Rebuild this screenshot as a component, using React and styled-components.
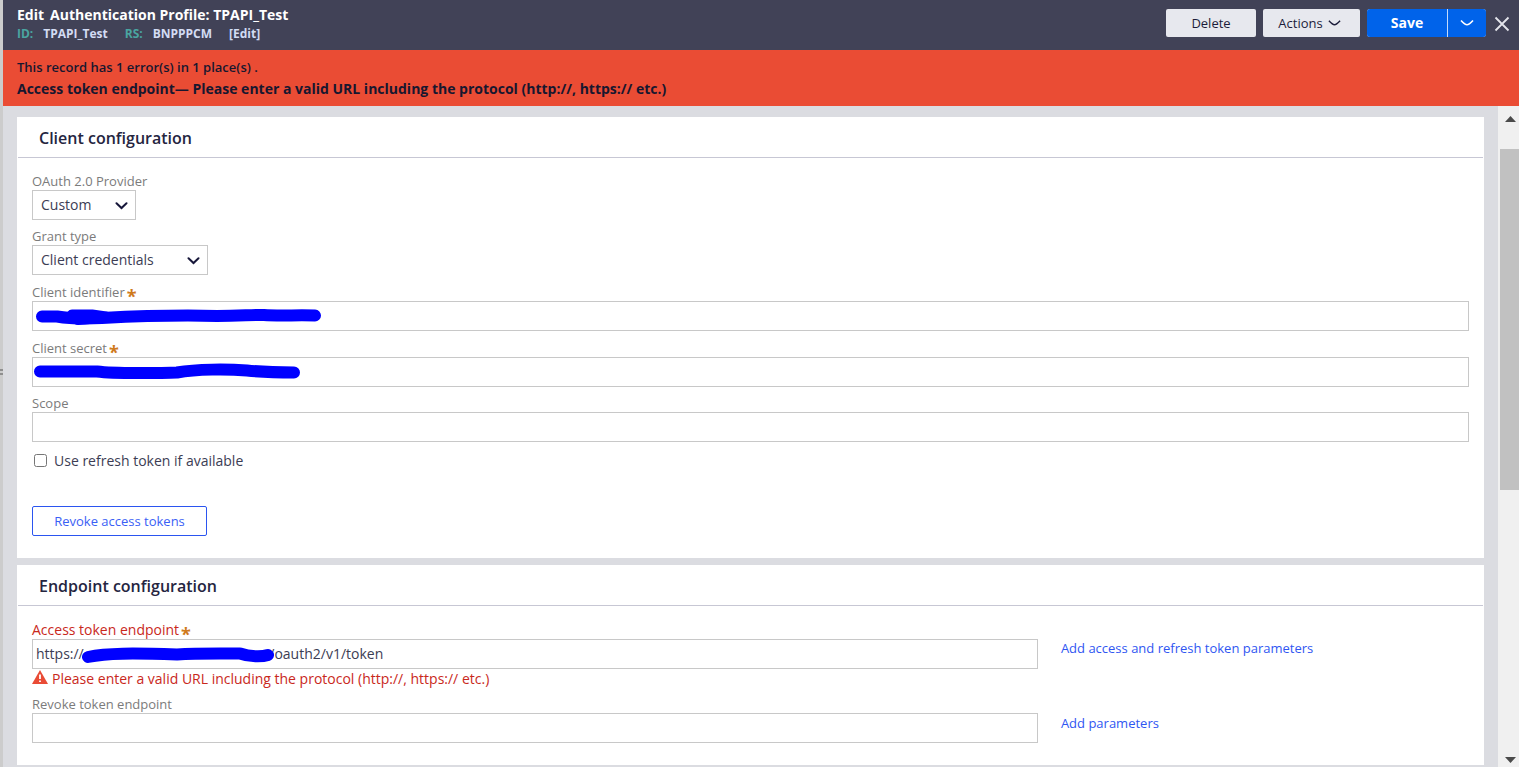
import React from "react";
import styled, { createGlobalStyle } from "styled-components";

const GlobalStyle = createGlobalStyle`
  * { box-sizing: border-box; }
  body {
    margin: 0;
    font-family: "Open Sans", "Noto Sans", sans-serif;
    font-size: 14px;
    color: #3c3d54;
    background: #dbdce1;
  }
  button, input, select { font-family: inherit; }
`;

const Page = styled.div`
  display: flex;
  height: 100vh;
  overflow: hidden;
`;

const Splitter = styled.div`
  flex: none;
  width: 3px;
  display: flex;
  flex-direction: column;
  justify-content: center;
  gap: 2px;
  padding-bottom: 24px;
  background: #cccccc;
`;

const Grip = styled.span`
  height: 2px;
  background: #8f8f8f;
`;

const Main = styled.div`
  flex: 1;
  min-width: 0;
  display: flex;
  flex-direction: column;
`;

const Header = styled.header`
  flex: none;
  display: flex;
  justify-content: space-between;
  height: 50px;
  padding: 0 9px 0 14px;
  background: #414257;
`;

const Heading = styled.div`
  padding-top: 5px;
`;

const Title = styled.h1`
  display: flex;
  gap: 6px;
  margin: 0;
  font-size: 14px;
  line-height: 20px;
  font-weight: 700;
  color: #ffffff;
`;

const Meta = styled.div`
  display: flex;
  font-size: 12px;
  line-height: 18px;
  font-weight: 700;
  color: #d3dcf3;
`;

const MetaKey = styled.span`
  margin-right: 10px;
  color: #4aa5a1;
`;

const MetaValue = styled.span`
  margin-right: 17px;
`;

const EditLink = styled.a`
  color: inherit;
  text-decoration: none;
`;

const Toolbar = styled.div`
  display: flex;
  align-items: flex-start;
  gap: 7px;
  padding-top: 9px;
`;

const ToolButton = styled.button`
  display: flex;
  align-items: center;
  justify-content: center;
  gap: 5px;
  width: ${(p) => p.$width}px;
  height: 28px;
  padding: 0;
  border: 0;
  border-radius: 2px;
  background: #e7e8ee;
  color: #1c1c3a;
  font-size: 13px;
`;

const MenuButton = styled(ToolButton)`
  padding-right: 4px;
`;

const SplitButton = styled.div`
  display: flex;
  gap: 1px;
  border-radius: 3px;
  overflow: hidden;
  background: #c4dafb;
`;

const PrimaryButton = styled.button`
  display: flex;
  align-items: center;
  justify-content: center;
  width: ${(p) => p.$width}px;
  height: 28px;
  padding: 0 0 1px;
  border: 0;
  background: #0063ea;
  color: #ffffff;
  font-size: 14px;
  font-weight: 700;
`;

const CloseButton = styled.button`
  display: flex;
  align-items: center;
  justify-content: center;
  width: 16px;
  height: 28px;
  margin-left: 1px;
  padding: 2px 0 0;
  border: 0;
  background: none;
`;

const ErrorBanner = styled.div`
  flex: none;
  height: 56px;
  padding: 7px 14px;
  background: #ea4c34;
  color: #17172f;
`;

const ErrorSummary = styled.p`
  margin: 0;
  font-size: 13px;
  line-height: 21px;
  font-weight: 600;
`;

const ErrorDetail = styled.p`
  margin: 0;
  font-size: 14px;
  line-height: 22px;
  font-weight: 700;
`;

const Viewport = styled.div`
  flex: 1;
  min-height: 0;
  display: flex;
`;

const Content = styled.main`
  flex: 1;
  min-width: 0;
  display: flex;
  flex-direction: column;
  gap: 7px;
  padding: 11px 14px 0;
  overflow: hidden;
`;

const Card = styled.section`
  flex: none;
  background: #ffffff;
`;

const CardTitle = styled.h2`
  margin: 0 1px;
  padding: 0 21px;
  border-bottom: 1px solid #c7c7d4;
  font-size: 16px;
  line-height: 42px;
  height: 41px;
  font-weight: 600;
  color: #25253f;
`;

const CardBody = styled.div`
  display: flex;
  flex-direction: column;
  gap: 8px;
  padding: 15px 15px 22px;
`;

const Field = styled.div`
  display: flex;
  flex-direction: column;
  align-items: flex-start;
`;

const Label = styled.label`
  height: ${(p) => (p.$required ? 18 : 17)}px;
  font-size: ${(p) => (p.$invalid ? 14 : 13)}px;
  line-height: ${(p) => (p.$required ? 18 : 16)}px;
  color: ${(p) => (p.$invalid ? "#c9281c" : "#7b7b7b")};
`;

const Star = styled.span`
  margin-left: 2px;
  font-size: 18px;
  line-height: 0;
  font-weight: 700;
  vertical-align: -6px;
  color: #cf7a1c;
`;

const ControlBox = styled.div`
  position: relative;
  width: ${(p) => p.$width || "100%"};
`;

const TextInput = styled.input`
  display: block;
  width: 100%;
  height: 30px;
  padding: 0 3px 2px;
  border: 1px solid #c8c8c8;
  border-radius: 0;
  background: #ffffff;
  color: #3c3d54;
  font-size: 14px;
`;

const Select = styled.select`
  display: block;
  width: 100%;
  height: 30px;
  padding: 0 8px 2px;
  appearance: none;
  border: 1px solid #c8c8c8;
  border-radius: 0;
  background: #ffffff;
  color: #3c3d54;
  font-size: 14px;
`;

const SelectArrow = styled.svg`
  position: absolute;
  right: 8px;
  top: 12px;
  pointer-events: none;
`;

const Scribble = styled.svg`
  position: absolute;
  left: 0;
  top: 0;
  pointer-events: none;
`;

const CheckRow = styled.label`
  display: flex;
  align-items: center;
  gap: 7px;
  height: 22px;
  padding-bottom: 2px;
  color: #3c3d54;
`;

const Checkbox = styled.input`
  width: 13px;
  height: 13px;
  margin: 0 0 0 2px;
`;

const OutlineButton = styled.button`
  align-self: flex-start;
  width: 175px;
  height: 30px;
  margin-top: 26px;
  padding: 0;
  border: 1px solid #2b55f0;
  border-radius: 2px;
  background: #ffffff;
  color: #3a60f5;
  font-size: 13px;
`;

const EndpointRow = styled.div`
  display: grid;
  grid-template-columns: 70% 1fr;
  column-gap: 23px;
  align-items: start;
`;

const ParamLink = styled.a`
  padding-top: 18px;
  font-size: 13px;
  line-height: 18px;
  color: #2f56f2;
  text-decoration: none;
`;

const FieldError = styled.div`
  display: flex;
  align-items: center;
  gap: 4px;
  height: 19px;
  color: #c9281c;
`;

const WarningIcon = styled.svg`
  margin-bottom: 3px;
`;

const ScrollTrack = styled.div`
  flex: none;
  width: 21px;
  display: flex;
  flex-direction: column;
  padding-left: 2px;
  background: #f0f0f0;
`;

const ScrollArrow = styled.svg`
  flex: none;
  display: block;
`;

const ScrollRail = styled.div`
  flex: 1;
  padding-top: 24px;
`;

const ScrollThumb = styled.div`
  height: 57%;
  background: #c1c1c1;
`;

function Chevron({ color, width }) {
  return (
    <svg width={width} height="8" viewBox="0 0 14 8" fill="none" stroke={color} strokeWidth="1.6">
      <path d="M1 1.5 Q5 5.8 7 5.8 Q9 5.8 13 1.5" />
    </svg>
  );
}

function SelectField({ id, label, width, options }) {
  return (
    <Field>
      <Label htmlFor={id}>{label}</Label>
      <ControlBox $width={width}>
        <Select id={id}>
          {options.map((o) => (
            <option key={o}>{o}</option>
          ))}
        </Select>
        <SelectArrow width="13" height="8" viewBox="0 0 13 8" fill="none" stroke="#17173a" strokeWidth="2">
          <path d="M1.5 1.2 L6.5 6 L11.5 1.2" strokeLinecap="round" />
        </SelectArrow>
      </ControlBox>
    </Field>
  );
}

function TextField({ id, label, required, invalid, value = "", error, children }) {
  return (
    <Field>
      <Label htmlFor={id} $required={required} $invalid={invalid}>
        {label}
        {required && <Star>*</Star>}
      </Label>
      <ControlBox>
        <TextInput id={id} type="text" defaultValue={value} />
        {children}
      </ControlBox>
      {error && (
        <FieldError>
          <WarningIcon width="16" height="14" viewBox="0 0 16 14">
            <path d="M8 0 L16 14 H0 Z" fill="#e94b35" />
            <path d="M8 4.5 V9 M8 10.5 V12" stroke="#fff" strokeWidth="1.8" />
          </WarningIcon>
          {error}
        </FieldError>
      )}
    </Field>
  );
}

const endpointUrl = "https://" + "\u2003".repeat(13) + "\u2005/oauth2/v1/token";

export default function App() {
  return (
    <Page>
      <GlobalStyle />
      <Splitter>
        <Grip />
        <Grip />
      </Splitter>
      <Main>
        <Header>
          <Heading>
            <Title>
              <span>Edit</span>
              <span>Authentication Profile: TPAPI_Test</span>
            </Title>
            <Meta>
              <MetaKey>ID:</MetaKey>
              <MetaValue>TPAPI_Test</MetaValue>
              <MetaKey>RS:</MetaKey>
              <MetaValue>BNPPPCM</MetaValue>
              <EditLink href="#edit">[Edit]</EditLink>
            </Meta>
          </Heading>
          <Toolbar>
            <ToolButton type="button" $width={90}>Delete</ToolButton>
            <MenuButton type="button" $width={97}>
              Actions
              <Chevron color="#1c1c3a" width={13} />
            </MenuButton>
            <SplitButton>
              <PrimaryButton type="button" $width={80}>Save</PrimaryButton>
              <PrimaryButton type="button" $width={38} aria-label="More save options">
                <Chevron color="#ffffff" width={14} />
              </PrimaryButton>
            </SplitButton>
            <CloseButton type="button" aria-label="Close">
              <svg width="16" height="16" viewBox="0 0 16 16" stroke="#e4e5ec" strokeWidth="1.8">
                <path d="M1.5 1.5 L14.5 14.5 M14.5 1.5 L1.5 14.5" />
              </svg>
            </CloseButton>
          </Toolbar>
        </Header>
        <ErrorBanner role="alert">
          <ErrorSummary>This record has 1 error(s) in 1 place(s) .</ErrorSummary>
          <ErrorDetail>
            Access token endpoint— Please enter a valid URL including the protocol (http://, https:// etc.)
          </ErrorDetail>
        </ErrorBanner>
        <Viewport>
          <Content>
            <Card>
              <CardTitle>Client configuration</CardTitle>
              <CardBody>
                <SelectField id="provider" label="OAuth 2.0 Provider" width="104px" options={["Custom"]} />
                <SelectField id="grant" label="Grant type" width="176px" options={["Client credentials"]} />
                <TextField id="client-id" label="Client identifier" required>
                  <Scribble width="300" height="30" fill="none" stroke="#0000ff" strokeLinecap="round" strokeLinejoin="round">
                    <path d="M10 15.5 H25 C40 18 50 18 70 17 C110 15 150 14 185 15 C210 15 220 13.500 232 14 C245 15 265 14 283 14.500" strokeWidth="12" />
                    <path d="M40 14 H60 L74 16 L46 18.500 Z" fill="#0000ff" strokeWidth="11" />
                  </Scribble>
                </TextField>
                <TextField id="client-secret" label="Client secret" required>
                  <Scribble width="300" height="30" fill="none" stroke="#0000ff" strokeLinecap="round" strokeLinejoin="round">
                    <path d="M8 14.500 H65 C85 17 120 16 145 15.500 C165 12 195 12 215 13.500 C235 15.500 250 15.500 262 15.500" strokeWidth="12" />
                  </Scribble>
                </TextField>
                <TextField id="scope" label="Scope" />
                <CheckRow>
                  <Checkbox type="checkbox" />
                  Use refresh token if available
                </CheckRow>
                <OutlineButton type="button">Revoke access tokens</OutlineButton>
              </CardBody>
            </Card>
            <Card>
              <CardTitle>Endpoint configuration</CardTitle>
              <CardBody>
                <EndpointRow>
                  <TextField
                    id="access-endpoint"
                    label="Access token endpoint"
                    required
                    invalid
                    value={endpointUrl}
                    error="Please enter a valid URL including the protocol (http://, https:// etc.)"
                  >
                    <Scribble width="260" height="30" fill="none" stroke="#0000ff" strokeLinecap="round" strokeLinejoin="round">
                      <path d="M56 18 C75 14 100 14 145 15.500 C165 14 190 14.500 208 14.500 C218 18 230 18 236 16" strokeWidth="12" />
                    </Scribble>
                  </TextField>
                  <ParamLink href="#token-parameters">Add access and refresh token parameters</ParamLink>
                </EndpointRow>
                <EndpointRow>
                  <TextField id="revoke-endpoint" label="Revoke token endpoint" />
                  <ParamLink href="#revoke-parameters">Add parameters</ParamLink>
                </EndpointRow>
              </CardBody>
            </Card>
          </Content>
          <ScrollTrack aria-hidden="true">
            <ScrollArrow width="19" height="19" viewBox="0 0 19 19">
              <path d="M5 16 L10.5 10 L16 16 Z" fill="#4a4a4a" />
            </ScrollArrow>
            <ScrollRail>
              <ScrollThumb />
            </ScrollRail>
            <ScrollArrow width="19" height="19" viewBox="0 0 19 19">
              <path d="M5 9 L10.500 15 L16 9 Z" fill="#4a4a4a" />
            </ScrollArrow>
          </ScrollTrack>
        </Viewport>
      </Main>
    </Page>
  );
}
